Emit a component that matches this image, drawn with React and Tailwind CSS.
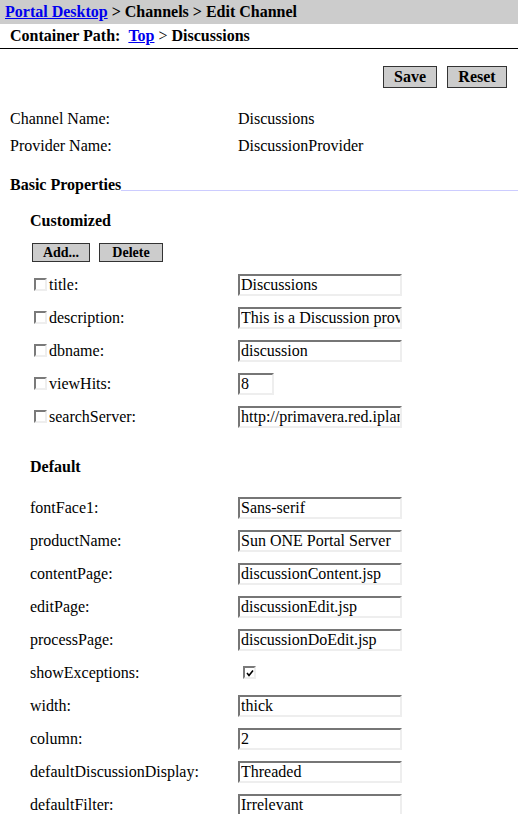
import React from "react";

const serif = { fontFamily: '"Liberation Serif", "Times New Roman", serif' };

function TextBox({ value, narrow }) {
  return (
    <input
      readOnly
      value={value}
      className={`${narrow ? "w-[36px]" : "w-[164px]"} h-[22px] bg-white border-2 border-t-[#767676] border-l-[#767676] border-b-[#eeeeee] border-r-[#eeeeee] text-[16px] leading-[18px] pl-[1px] text-black outline-none`}
      style={serif}
    />
  );
}

function Check({ checked }) {
  return (
    <span className="relative inline-block w-[13px] h-[13px] border-2 border-t-[#7a7a7a] border-l-[#7a7a7a] border-b-[#eeeeee] border-r-[#eeeeee] bg-white">
      {checked && (
        <svg className="absolute left-[1px] top-[1px]" width="8" height="8" viewBox="0 0 8 8">
          <path d="M1 4 L3 6.5 L7 1.5" stroke="#000" strokeWidth="1.6" fill="none" />
        </svg>
      )}
    </span>
  );
}

function Btn({ children, small, w }) {
  return (
    <button
      className={`bg-[#cccccc] border border-[#333333] font-bold text-black text-center ${w} ${
        small ? "h-[19px] text-[14px] leading-[16px]" : "h-[22px] text-[16px] leading-[18px]"
      }`}
      style={serif}
    >
      {children}
    </button>
  );
}

const custom = [
  ["title:", "Discussions"],
  ["description:", "This is a Discussion provider"],
  ["dbname:", "discussion"],
  ["viewHits:", "8", true],
  ["searchServer:", "http://primavera.red.iplanet.com"],
];

const defaults = [
  ["fontFace1:", "Sans-serif"],
  ["productName:", "Sun ONE Portal Server"],
  ["contentPage:", "discussionContent.jsp"],
  ["editPage:", "discussionEdit.jsp"],
  ["processPage:", "discussionDoEdit.jsp"],
  ["showExceptions:", null],
  ["width:", "thick"],
  ["column:", "2"],
  ["defaultDiscussionDisplay:", "Threaded"],
  ["defaultFilter:", "Irrelevant"],
];

export default function App() {
  return (
    <div className="w-[518px] h-[814px] overflow-hidden bg-white text-black" style={serif}>
      <div className="h-[24px] bg-[#cccccc] pl-[5px] text-[16px] font-bold leading-[24px] whitespace-nowrap">
        <a className="text-[#0000ee] underline">Portal Desktop</a> &gt; Channels &gt; Edit Channel
      </div>
      <div className="h-[24px] pl-[10px] text-[16px] font-bold leading-[24px] whitespace-nowrap">
        Container Path:&nbsp;&nbsp;<a className="text-[#0000ee] underline">Top</a> <span className="font-normal">&gt;</span> Discussions
      </div>
      <div className="h-px bg-black" />
      <div className="flex justify-end gap-[10px] pr-[11px] mt-[17px]">
        <Btn w="w-[54px]">Save</Btn>
        <Btn w="w-[60px]">Reset</Btn>
      </div>
      <div className="mt-[17px] text-[16px]">
        <div className="grid grid-cols-[228px_1fr] pl-[10px] h-[27px] items-center">
          <span>Channel Name:</span>
          <span>Discussions</span>
        </div>
        <div className="grid grid-cols-[228px_1fr] pl-[10px] h-[27px] items-center">
          <span>Provider Name:</span>
          <span>DiscussionProvider</span>
        </div>
      </div>
      <div className="mt-[12px] pl-[10px] flex items-end h-[24px]">
        <span className="font-bold text-[16px] leading-[20px] whitespace-nowrap">Basic Properties</span>
        <div className="flex-1 h-px bg-[#ccccff] mb-[4px]" />
      </div>
      <div className="pl-[30px] mt-[16px] font-bold text-[16px] leading-[20px]">Customized</div>
      <div className="pl-[32px] mt-[12px] flex gap-[9px]">
        <Btn small w="w-[58px]">Add...</Btn>
        <Btn small w="w-[64px]">Delete</Btn>
      </div>
      <div className="mt-[6px] text-[16px]">
        {custom.map(([label, val, narrow]) => (
          <div key={label} className="grid grid-cols-[208px_1fr] pl-[30px] h-[33px] items-center">
            <span className="flex items-center gap-[2px] pl-[4px]">
              <Check />
              <span>{label}</span>
            </span>
            <TextBox value={val} narrow={narrow} />
          </div>
        ))}
      </div>
      <div className="pl-[30px] mt-[24px] font-bold text-[16px] leading-[20px]">Default</div>
      <div className="mt-[14px] text-[16px]">
        {defaults.map(([label, val]) => (
          <div key={label} className="grid grid-cols-[208px_1fr] pl-[30px] h-[33px] items-center">
            <span>{label}</span>
            {val === null ? (
              <span className="pl-[5px] flex items-center">
                <Check checked />
              </span>
            ) : (
              <TextBox value={val} />
            )}
          </div>
        ))}
      </div>
    </div>
  );
}
